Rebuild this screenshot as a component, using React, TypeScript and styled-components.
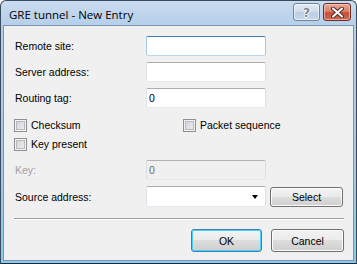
import React from 'react';
import styled, { createGlobalStyle, css } from 'styled-components';

const Global = createGlobalStyle`
  html, body { margin: 0; padding: 0; background: #ffffff; }
  body { font-family: "Liberation Sans", Arial, sans-serif; font-size: 10.5px; color: #000; }
  * { box-sizing: border-box; }
`;

const Window = styled.div`
  width: 357px;
  height: 264px;
  border: 1px solid #3a4b60;
  border-bottom-color: #1f2a36;
  border-radius: 6px 6px 0 0;
  background: linear-gradient(#cadcef 0px, #b6cfea 24px, #a9c7e6 60%, #86cbee 100%);
  padding: 0 2px 2px 2px;
  display: flex;
  flex-direction: column;
`;

const TitleBar = styled.div`
  height: 24px;
  display: flex;
  align-items: flex-start;
  padding: 0 3px 0 6px;
`;

const Title = styled.div`
  font-family: "Open Sans", "Noto Sans", sans-serif;
  font-size: 11.5px;
  color: #000;
  line-height: 16px;
  margin-top: 6px;
  flex: 1;
`;

const CaptionButtons = styled.div`
  display: flex;
  gap: 3px;
  margin-top: 2px;
`;

const CaptionButton = styled.div<{ $close?: boolean }>`
  height: 18px;
  width: ${p => (p.$close ? 28 : 27)}px;
  border-radius: 3px;
  display: flex;
  align-items: center;
  justify-content: center;
  ${p =>
    p.$close
      ? css`
          border: 1px solid #6b2f25;
          background: linear-gradient(#e8a897 0%, #d98270 45%, #c4503b 55%, #cf6a52 100%);
          box-shadow: inset 0 0 0 1px rgba(255, 220, 210, 0.55);
        `
      : css`
          border: 1px solid #6f8299;
          background: linear-gradient(#e3ecf6 0%, #d0dded 45%, #b9cde3 55%, #c7d8eb 100%);
          box-shadow: inset 0 0 0 1px rgba(255, 255, 255, 0.6);
        `}
`;

const HelpGlyph = styled.span`
  font-family: "DejaVu Sans", sans-serif;
  font-weight: bold;
  font-size: 13px;
  line-height: 13px;
  color: #7d8a99;
  text-shadow: 0 0 1px #fff, 1px 0 0 #fff, -1px 0 0 #fff, 0 1px 0 #fff;
`;

const Client = styled.div`
  flex: 1;
  background: #f0f0f0;
  border: 1px solid #7d93ae;
  padding: 10px 9px 0 10px;
  display: flex;
  flex-direction: column;
`;

const FieldRow = styled.div<{ $mt?: number; $h?: number }>`
  display: grid;
  grid-template-columns: 132px 120px auto;
  align-items: center;
  height: ${p => p.$h ?? 20}px;
  margin-top: ${p => p.$mt ?? 0}px;
`;

const Label = styled.span<{ $disabled?: boolean }>`
  color: ${p => (p.$disabled ? '#a0a0a0' : '#000')};
  margin-left: 1px;
`;

const TextBox = styled.div<{ $focused?: boolean; $disabled?: boolean; $h?: number }>`
  height: ${p => p.$h ?? 20}px;
  border: 1px solid;
  border-radius: 2px;
  border-color: #abadb3 #dbdfe6 #e3e9ef #e2e3ea;
  background: ${p => (p.$disabled ? '#f0f0f0' : '#ffffff')};
  color: ${p => (p.$disabled ? '#6d6d6d' : '#000')};
  padding: 0 2px;
  display: flex;
  align-items: center;
  position: relative;
  ${p =>
    p.$focused &&
    css`
      border-color: #3d7bad #a4c9e3 #b7d9ed #a4c9e3;
    `}
  ${p =>
    p.$disabled &&
    css`
      border-color: #adb2b5 #dadfe4 #e3e9ef #dadfe4;
    `}
`;

const DropArrow = styled.span`
  position: absolute;
  right: 7px;
  top: 8px;
  width: 0;
  height: 0;
  border-left: 3.5px solid transparent;
  border-right: 3.5px solid transparent;
  border-top: 4px solid #000;
`;

const CheckRow = styled.div<{ $mt?: number }>`
  display: grid;
  grid-template-columns: 169px auto;
  height: 13px;
  align-items: center;
  margin-top: ${p => p.$mt ?? 0}px;
`;

const Check = styled.label`
  display: flex;
  align-items: center;
  gap: 4px;
  line-height: 13px;
`;

const CheckBox = styled.span`
  width: 13px;
  height: 13px;
  border: 1px solid #8e8f8f;
  background: linear-gradient(135deg, #cbcfd5 0%, #e3e4e6 60%, #f4f4f4 100%);
  box-shadow: inset 0 0 0 1px #f4f4f4, inset 0 0 0 2px #b7b9bd;
  display: inline-block;
`;

const Separator = styled.div`
  height: 2px;
  margin-top: 11px;
  border-top: 1px solid #a0a0a0;
  border-bottom: 1px solid #ffffff;
`;

const ButtonRow = styled.div`
  display: flex;
  justify-content: flex-end;
  gap: 9px;
  margin-top: 9px;
`;

const Button = styled.div<{ $default?: boolean; $w?: number; $h?: number; $ml?: number }>`
  width: ${p => p.$w ?? 73}px;
  height: ${p => p.$h ?? 23}px;
  margin-left: ${p => p.$ml ?? 0}px;
  border: 1px solid ${p => (p.$default ? '#3c7fb1' : '#707070')};
  border-radius: 3px;
  background: linear-gradient(#f2f2f2 0%, #ebebeb 49%, #dddddd 50%, #cfcfcf 100%);
  box-shadow: inset 0 0 0 1px ${p => (p.$default ? '#48d4fa' : '#fcfcfc')};
  display: flex;
  align-items: center;
  justify-content: center;
  color: #000;
`;

export default function App() {
  return (
    <>
      <Global />
      <Window>
        <TitleBar>
          <Title>GRE tunnel - New Entry</Title>
          <CaptionButtons>
            <CaptionButton>
              <HelpGlyph>?</HelpGlyph>
            </CaptionButton>
            <CaptionButton $close>
              <svg width="13" height="11" viewBox="0 0 13 11">
                <path d="M2 1.5 L11 9.5 M11 1.5 L2 9.5" stroke="#5a2a22" strokeWidth="4" strokeLinecap="round" />
                <path d="M2 1.5 L11 9.5 M11 1.5 L2 9.5" stroke="#ffffff" strokeWidth="2" strokeLinecap="round" />
              </svg>
            </CaptionButton>
          </CaptionButtons>
        </TitleBar>
        <Client>
          <FieldRow>
            <Label>Remote site:</Label>
            <TextBox $focused />
          </FieldRow>
          <FieldRow $mt={6}>
            <Label>Server address:</Label>
            <TextBox />
          </FieldRow>
          <FieldRow $mt={6}>
            <Label>Routing tag:</Label>
            <TextBox>0</TextBox>
          </FieldRow>
          <CheckRow $mt={11}>
            <Check>
              <CheckBox />
              Checksum
            </Check>
            <Check>
              <CheckBox />
              Packet sequence
            </Check>
          </CheckRow>
          <CheckRow $mt={6}>
            <Check>
              <CheckBox />
              Key present
            </Check>
          </CheckRow>
          <FieldRow $mt={9}>
            <Label $disabled>Key:</Label>
            <TextBox $disabled>0</TextBox>
          </FieldRow>
          <FieldRow $mt={6} $h={21}>
            <Label>Source address:</Label>
            <TextBox $h={21}>
              <DropArrow />
            </TextBox>
            <Button $h={20} $ml={4}>Select</Button>
          </FieldRow>
          <Separator />
          <ButtonRow>
            <Button $default $w={71}>OK</Button>
            <Button>Cancel</Button>
          </ButtonRow>
        </Client>
      </Window>
    </>
  );
}
